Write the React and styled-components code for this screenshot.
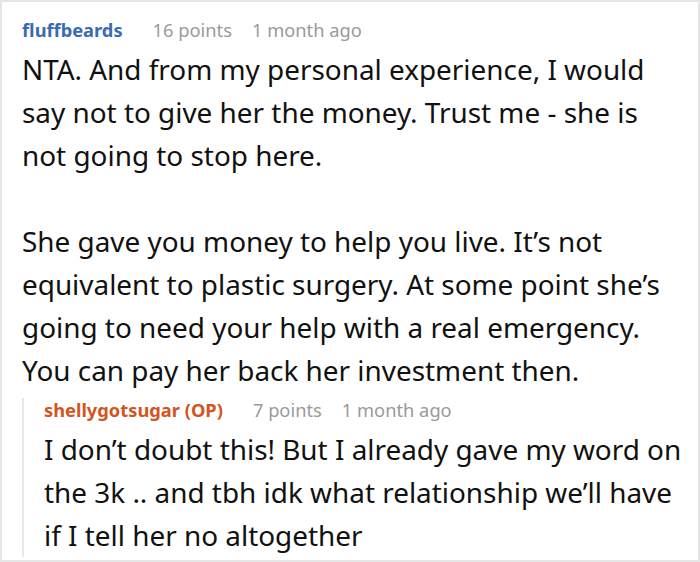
import React from 'react';
import styled, { createGlobalStyle } from 'styled-components';

const GlobalStyle = createGlobalStyle`
	html, body {
		margin: 0;
		padding: 0;
		background: #fff;
	}
	body {
		font-family: 'Noto Sans', 'Open Sans', sans-serif;
	}
`;

const Frame = styled.div`
	box-sizing: border-box;
	width: 700px;
	height: 562px;
	border: 2px solid #e6e6e6;
	background: #fff;
	padding: 16px 2px 0 20px;
	overflow: hidden;
`;

const Comment = styled.div`
	display: flex;
	flex-direction: column;
`;

const Reply = styled.div`
	display: flex;
	flex-direction: column;
	margin-top: 6px;
	padding-left: 20px;
	border-left: 2px solid #e8e8e8;
`;

const Meta = styled.div`
	display: flex;
	align-items: baseline;
	gap: 20px;
	font-size: 18.3px;
	line-height: 24px;
`;

const Author = styled.span`
	font-weight: 700;
	color: ${(p) => (p.$op ? '#d4541f' : '#3a6ab4')};
	margin-right: 10px;
`;

const Info = styled.span`
	color: #9a9a9a;
`;

const Body = styled.div`
	font-size: 27.9px;
	line-height: 43px;
	color: #111;
	margin-top: 6px;
	padding-right: ${(p) => p.$inset || 0}px;
	p {
		margin: 0 0 43px;
	}
	p:last-child {
		margin-bottom: 0;
	}
`;

export default function App() {
	return (
		<>
			<GlobalStyle />
			<Frame>
				<Comment>
					<Meta>
						<Author>fluffbeards</Author>
						<Info>16 points</Info>
						<Info>1 month ago</Info>
					</Meta>
					<Body $inset={14}>
						<p>
							NTA. And from my personal experience, I would say not to give her
							the money. Trust me - she is not going to stop here.
						</p>
						<p>
							She gave you money to help you live. It’s not equivalent to
							plastic surgery. At some point she’s going to need your help with
							a real emergency. You can pay her back her investment then.
						</p>
					</Body>
					<Reply>
						<Meta>
							<Author $op>shellygotsugar (OP)</Author>
							<Info>7 points</Info>
							<Info>1 month ago</Info>
						</Meta>
						<Body>
							<p>
								I don’t doubt this! But I already gave my word on the 3k .. and
								tbh idk what relationship we’ll have if I tell her no altogether
							</p>
						</Body>
					</Reply>
				</Comment>
			</Frame>
		</>
	);
}
